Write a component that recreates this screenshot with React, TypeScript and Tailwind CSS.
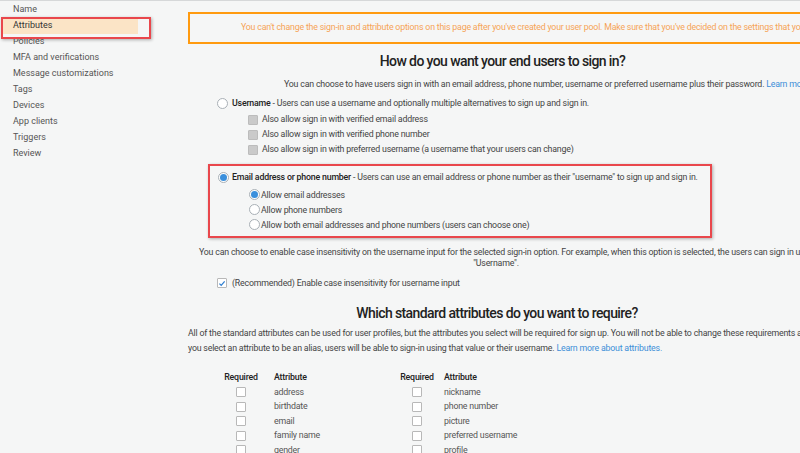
import React from "react";

const navItems = [
  "Name",
  "Attributes",
  "Policies",
  "MFA and verifications",
  "Message customizations",
  "Tags",
  "Devices",
  "App clients",
  "Triggers",
  "Review",
];

const leftAttrs = ["address", "birthdate", "email", "family name", "gender"];
const rightAttrs = ["nickname", "phone number", "picture", "preferred username", "profile"];

function Radio({ checked }: { checked?: boolean }) {
  return (
    <span className="flex h-[11px] w-[11px] shrink-0 items-center justify-center rounded-full border border-[#a9b0b6] bg-white">
      {checked && <span className="h-[7px] w-[7px] rounded-full bg-[#3a8fdc]" />}
    </span>
  );
}

function Box({ disabled, checked }: { disabled?: boolean; checked?: boolean }) {
  return (
    <span
      className={`flex h-[10px] w-[10px] shrink-0 items-center justify-center rounded-[1px] border ${
        disabled ? "border-[#bcbcbc] bg-[#cacaca]" : "border-[#b8b8b8] bg-white"
      }`}
    >
      {checked && (
        <svg viewBox="0 0 10 10" className="h-[9px] w-[9px]">
          <path d="M1.8 5.2 L4 7.3 L8.3 2.4" fill="none" stroke="#2f7fd0" strokeWidth="1.6" />
        </svg>
      )}
    </span>
  );
}

function AttrTable({ attrs, reqW, gap }: { attrs: string[]; reqW: string; gap: string }) {
  return (
    <div>
      <div className="flex h-[14px] items-center font-medium text-[#222]">
        <span className={`${reqW} text-center`}>Required</span>
        <span className={gap}>Attribute</span>
      </div>
      {attrs.map((a) => (
        <div key={a} className="flex h-[14.5px] items-center text-[#555]">
          <span className={`${reqW} flex justify-center`}>
            <Box />
          </span>
          <span className={gap}>{a}</span>
        </div>
      ))}
    </div>
  );
}

export default function App() {
  return (
    <div
      className="flex h-[453px] w-[800px] overflow-hidden border-t border-[#d6d8d9] bg-[#f5f6f6] text-[#444]"
      style={{ fontFamily: "Roboto, 'Liberation Sans', sans-serif" }}
    >
      {/* sidebar */}
      <nav className="w-[188px] shrink-0 pt-[1px] text-[9px] text-[#555]">
        {navItems.map((item) =>
          item === "Attributes" ? (
            <div key={item} className="relative h-4">
              <div className="ml-[2px] flex h-4 w-[136px] items-center bg-[#fbe4c6] pl-[11px] text-[#333]">{item}</div>
              <div className="absolute left-[1px] top-[-1px] h-[22px] w-[150px] border-2 border-[#e9474c] shadow-[1px_1px_3px_rgba(0,0,0,0.3)]" />
            </div>
          ) : (
            <div key={item} className="flex h-4 items-center pl-[13px]">
              {item}
            </div>
          )
        )}
      </nav>

      {/* main */}
      <main className="w-[660px] shrink-0 text-[8.8px] tracking-[-0.2px] whitespace-nowrap">
        <div className="mt-[11px] flex h-[32px] w-[700px] items-center border-2 border-[#ff9a0f] pl-[51px] text-[#f6a456]">
          You can't change the sign-in and attribute options on this page after you've created your user pool. Make sure that you've decided on the settings that you want.
        </div>

        <h1 className="mt-[7px] w-[629px] text-center text-[14px] leading-[20px] font-medium tracking-[-0.6px] text-[#222]">
          How do you want your end users to sign in?
        </h1>
        <p className="mt-[7px] pl-[96px] leading-[12px]">
          You can choose to have users sign in with an email address, phone number, username or preferred username plus their password.{" "}
          <span className="text-[#3d8fd8]">Learn more.</span>
        </p>

        <div className="mt-[7px] flex items-center gap-[4px] pl-[29px] leading-[12px]">
          <Radio />
          <span>
            <b className="font-medium text-[#222]">Username</b> - Users can use a username and optionally multiple alternatives to sign up and sign in.
          </span>
        </div>
        <div className="mt-[3px] flex flex-col pl-[60px]">
          {[
            "Also allow sign in with verified email address",
            "Also allow sign in with verified phone number",
            "Also allow sign in with preferred username (a username that your users can change)",
          ].map((t) => (
            <div key={t} className="flex h-[15px] items-center gap-[4px]">
              <Box disabled />
              <span>{t}</span>
            </div>
          ))}
        </div>

        <div className="mt-[7px] ml-[20px] h-[74px] w-[504px] border-2 border-[#e9474c] pt-[5px] pl-[8px] leading-[12px] shadow-[1px_1px_3px_rgba(0,0,0,0.3)]">
          <div className="flex items-center gap-[3px]">
            <Radio checked />
            <span>
              <b className="font-medium text-[#222]">Email address or phone number</b> - Users can use an email address or phone number as their "username" to sign up and sign in.
            </span>
          </div>
          <div className="mt-[4px] flex flex-col pl-[31px]">
            {[
              "Allow email addresses",
              "Allow phone numbers",
              "Allow both email addresses and phone numbers (users can choose one)",
            ].map((t, i) => (
              <div key={t} className="flex h-[15px] items-center gap-[1px]">
                <Radio checked={i === 0} />
                <span>{t}</span>
              </div>
            ))}
          </div>
        </div>

        <div className="mt-[9px] leading-[11px]">
          <p className="pl-[11px]">
            You can choose to enable case insensitivity on the username input for the selected sign-in option. For example, when this option is selected, the users can sign in using either "username" or
          </p>
          <p className="w-[616px] text-center">"Username".</p>
        </div>

        <div className="mt-[8px] flex items-center gap-[5px] pl-[29px] leading-[12px]">
          <Box checked />
          <span>(Recommended) Enable case insensitivity for username input</span>
        </div>

        <h2 className="mt-[14px] w-[618px] text-center text-[14px] leading-[20px] font-medium tracking-[-0.6px] text-[#222]">
          Which standard attributes do you want to require?
        </h2>
        <div className="mt-[3px] leading-[15px]">
          <p>
            All of the standard attributes can be used for user profiles, but the attributes you select will be required for sign up. You will not be able to change these requirements after the pool is created. If
          </p>
          <p>
            you select an attribute to be an alias, users will be able to sign-in using that value or their username.{" "}
            <span className="text-[#3d8fd8]">Learn more about attributes.</span>
          </p>
        </div>

        <div className="mt-[15px] flex pl-[33px]">
          <div className="w-[178px]">
            <AttrTable attrs={leftAttrs} reqW="w-[40px]" gap="pl-[13px]" />
          </div>
          <AttrTable attrs={rightAttrs} reqW="w-[36px]" gap="pl-[9px]" />
        </div>
      </main>
    </div>
  );
}
